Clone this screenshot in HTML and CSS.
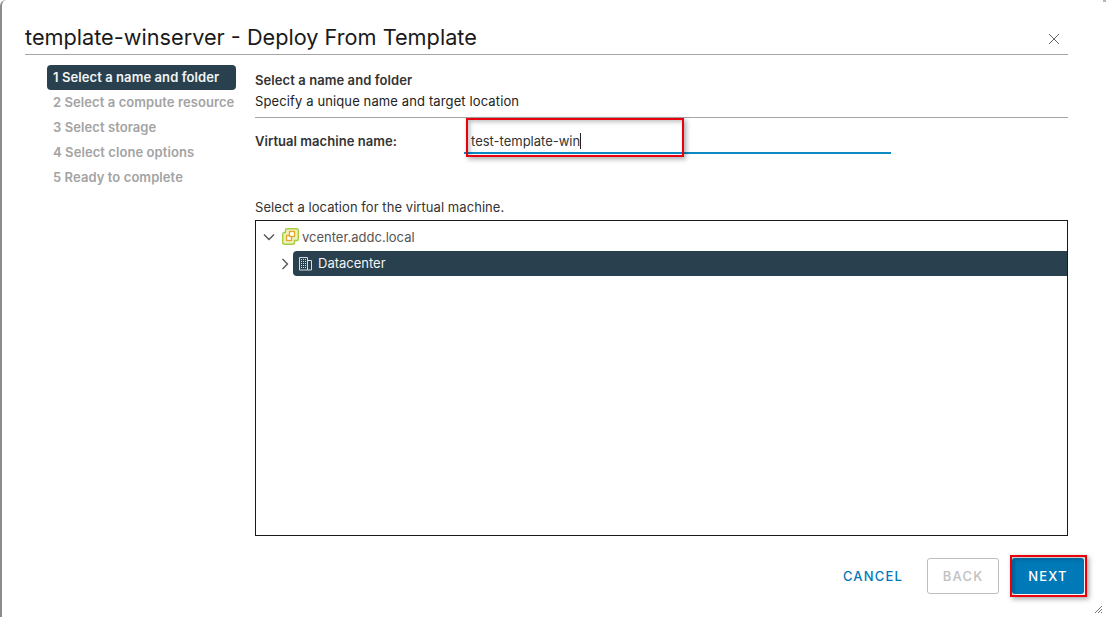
FILE: index.html
```html
<!DOCTYPE html>
<html>
<head>
<meta charset="UTF-8">
<title>Deploy From Template</title>
<link rel="stylesheet" href="styles.css">
</head>
<body>
<div class="dialog">
  <div class="title-bar">
    <h1 class="title">template-winserver - Deploy From Template</h1>
    <svg class="close" width="12" height="12" viewBox="0 0 12 12"><path d="M1 1 L11 11 M11 1 L1 11" stroke="#666" stroke-width="1" fill="none"/></svg>
  </div>
  <div class="wizard">
    <ul class="steps">
      <li class="step active">1 Select a name and folder</li>
      <li class="step">2 Select a compute resource</li>
      <li class="step">3 Select storage</li>
      <li class="step">4 Select clone options</li>
      <li class="step">5 Ready to complete</li>
    </ul>
    <div class="content">
      <div class="page-title">Select a name and folder</div>
      <div class="page-sub">Specify a unique name and target location</div>
      <div class="name-row">
        <label class="name-label">Virtual machine name:</label>
        <div class="name-input"><span class="marked">test-template-win</span><span class="caret"></span></div>
      </div>
      <div class="tree-label">Select a location for the virtual machine.</div>
      <div class="tree">
        <div class="node">
          <svg class="chev" width="12" height="12" viewBox="0 0 12 12"><path d="M1 3.5 L6 8.5 L11 3.5" stroke="#555" stroke-width="1.4" fill="none"/></svg>
          <svg class="node-icon" width="17" height="17" viewBox="0 0 17 17">
            <path d="M5 .7 H14.500 Q16.300 .7 16.300 2.500 V11 Q16.300 12.500 15 12.500 H12.500 V14.500 Q12.500 16.300 10.500 16.300 H2.500 Q.7 16.300 .7 14.500 V6.500 Q.7 4.500 2.500 4.500 H3.500 V2 Q3.500 .7 5 .7 Z" fill="#e9f3c2" stroke="#a9cb3f" stroke-width="1.400"/>
            <rect x="4.500" y="7.500" width="5" height="5" fill="#fff" stroke="#eaa61f" stroke-width="1.300"/>
            <rect x="7.500" y="3.500" width="5" height="5" fill="#fff" stroke="#eaa61f" stroke-width="1.300"/>
          </svg>
          <span class="node-name">vcenter.addc.local</span>
        </div>
        <div class="node child">
          <svg class="chev" width="12" height="12" viewBox="0 0 12 12"><path d="M3.5 1 L8.5 6 L3.5 11" stroke="#555" stroke-width="1.4" fill="none"/></svg>
          <div class="node-sel">
            <svg class="dc-icon" width="15" height="15" viewBox="0 0 15 15">
              <path d="M1.5 1.500 H9.500 V14 H1.500 Z M9.500 4.500 H13.500 V14 H9.500" fill="none" stroke="#d5dde2"/>
              <path d="M3 3.500 H8.500 M3 5.500 H8.500 M3 7.500 H8.500 M3 9.500 H8.500 M3 11.500 H8.500" stroke="#d5dde2" stroke-dasharray="1 1"/>
            </svg>
            <span class="sel-name">Datacenter</span>
          </div>
        </div>
      </div>
    </div>
  </div>
  <div class="footer">
    <button class="btn link">CANCEL</button>
    <button class="btn back">BACK</button>
    <button class="btn next">NEXT</button>
  </div>
  <svg class="grip" width="9" height="9" viewBox="0 0 9 9"><path d="M1 8 L8 1 M4 8 L8 4 M7 8 L8 7" stroke="#777" fill="none"/></svg>
</div>
</body>
</html>
```

FILE: styles.css
```css
* {
  box-sizing: border-box;
}

html, body {
  margin: 0;
  height: 100%;
}

body {
  background: #fff;
  font-family: Inter, "Open Sans", "Liberation Sans", sans-serif;
  color: #333;
  overflow: hidden;
}

.dialog {
  position: relative;
  height: 617px;
  padding: 0 38px 0 25px;
  background: #fff;
  border-left: 2px solid #8c8c8c;
  border-radius: 6px 0 0 0;
}

/* bit of the window corner at the top right */
.dialog::after {
  content: "";
  position: absolute;
  top: 0;
  right: 0;
  width: 3px;
  height: 2px;
  background: #b5b5b5;
}

.title-bar {
  display: flex;
  justify-content: space-between;
  align-items: flex-end;
  height: 55px;
  margin-left: -2px;
  padding-bottom: 3px;
  border-bottom: 1px solid #a6a6a6;
}

.title {
  margin: 0;
  font-size: 21.7px;
  font-weight: 400;
  line-height: 28px;
  color: #1a1a1a;
}

.close {
  margin: 0 8px 6px 0;
}

.wizard {
  display: flex;
  margin-top: 10px;
  margin-left: 20px;
}

.steps {
  list-style: none;
  width: 189px;
  margin: 0 19px 0 0;
  padding: 0;
  flex: none;
}

.step {
  height: 25px;
  padding-left: 6px;
  font-size: 13px;
  font-weight: 600;
  line-height: 25px;
  letter-spacing: 0.08px;
  color: #a3a3a3;
  white-space: nowrap;
}

.step.active {
  background: #29414e;
  color: #f2f4f5;
  border-radius: 4px;
}

.content {
  flex: 1;
}

.page-title {
  font-size: 13px;
  font-weight: 600;
  line-height: 18px;
  margin-top: 6px;
  letter-spacing: 0.08px;
}

.page-sub {
  font-size: 13px;
  line-height: 18px;
  margin-top: 3px;
  padding-bottom: 7px;
  border-bottom: 1px solid #a6a6a6;
  letter-spacing: 0.12px;
  color: #222;
}

.name-row {
  display: flex;
  height: 36px;
  align-items: flex-end;
}

.name-label {
  width: 209px;
  font-size: 13px;
  font-weight: 600;
  line-height: 22px;
  margin-bottom: 2px;
  letter-spacing: 0.05px;
}

.name-input {
  position: relative;
  display: flex;
  align-items: center;
  width: 427px;
  height: 24px;
  padding-left: 7px;
  font-size: 13px;
  border-bottom: 2px solid #0d8ac4;
  color: #333;
}

/* the red marker from the screenshot */
.name-input::after {
  content: "";
  position: absolute;
  box-sizing: border-box;
  left: 2px;
  top: -12px;
  width: 218px;
  height: 39px;
  border: 2px solid #e8000d;
  box-shadow: 2px 2px 5px rgba(0, 0, 0, 0.35), inset 2px 2px 4px rgba(0, 0, 0, 0.25);
}

.caret {
  display: block;
  width: 1px;
  height: 16px;
  background: #222;
}

.tree-label {
  font-size: 13px;
  line-height: 18px;
  margin-top: 44px;
  letter-spacing: 0.06px;
  color: #333;
}

.tree {
  height: 316px;
  margin-top: 4px;
  padding: 3px 0 0 7px;
  border: 1px solid #1a1a1a;
}

.node {
  display: flex;
  align-items: center;
  height: 25px;
  font-size: 13px;
}

.chev {
  flex: none;
}

.node-icon {
  margin-left: 7px;
  flex: none;
}

.node-name {
  margin-left: 3px;
  color: #555;
}

.child {
  margin-top: 2px;
  padding-left: 16px;
}

.node-sel {
  display: flex;
  align-items: center;
  flex: 1;
  height: 25px;
  margin-left: 2px;
  padding-left: 5px;
  background: #29414e;
  color: #f2f4f5;
  border-radius: 4px 0 0 4px;
}

.dc-icon {
  margin-right: 5px;
}

.sel-name {
  margin-top: -2px;
}

.footer {
  display: flex;
  justify-content: flex-end;
  align-items: center;
  gap: 12px;
  margin: 22px -16px 0 0;
}

.btn {
  height: 36px;
  font-family: inherit;
  font-size: 13px;
  font-weight: 500;
  letter-spacing: 1.2px;
  border-radius: 3px;
  background: none;
  border: 1px solid transparent;
}

.link {
  width: 84px;
  color: #0079b8;
}

.back {
  width: 72px;
  color: #c0c0c0;
  border-color: #bdbdbd;
}

.next {
  position: relative;
  width: 72px;
  margin-left: 1px;
  background: #0079b8;
  color: #fff;
}

.next::after {
  content: "";
  position: absolute;
  inset: -4px -4px -4px -3px;
  border: 2px solid #e8000d;
  box-shadow: 2px 2px 5px rgba(0, 0, 0, 0.35), inset 2px 2px 4px rgba(0, 0, 0, 0.25);
}

.grip {
  position: absolute;
  right: 3px;
  bottom: 3px;
}
```
